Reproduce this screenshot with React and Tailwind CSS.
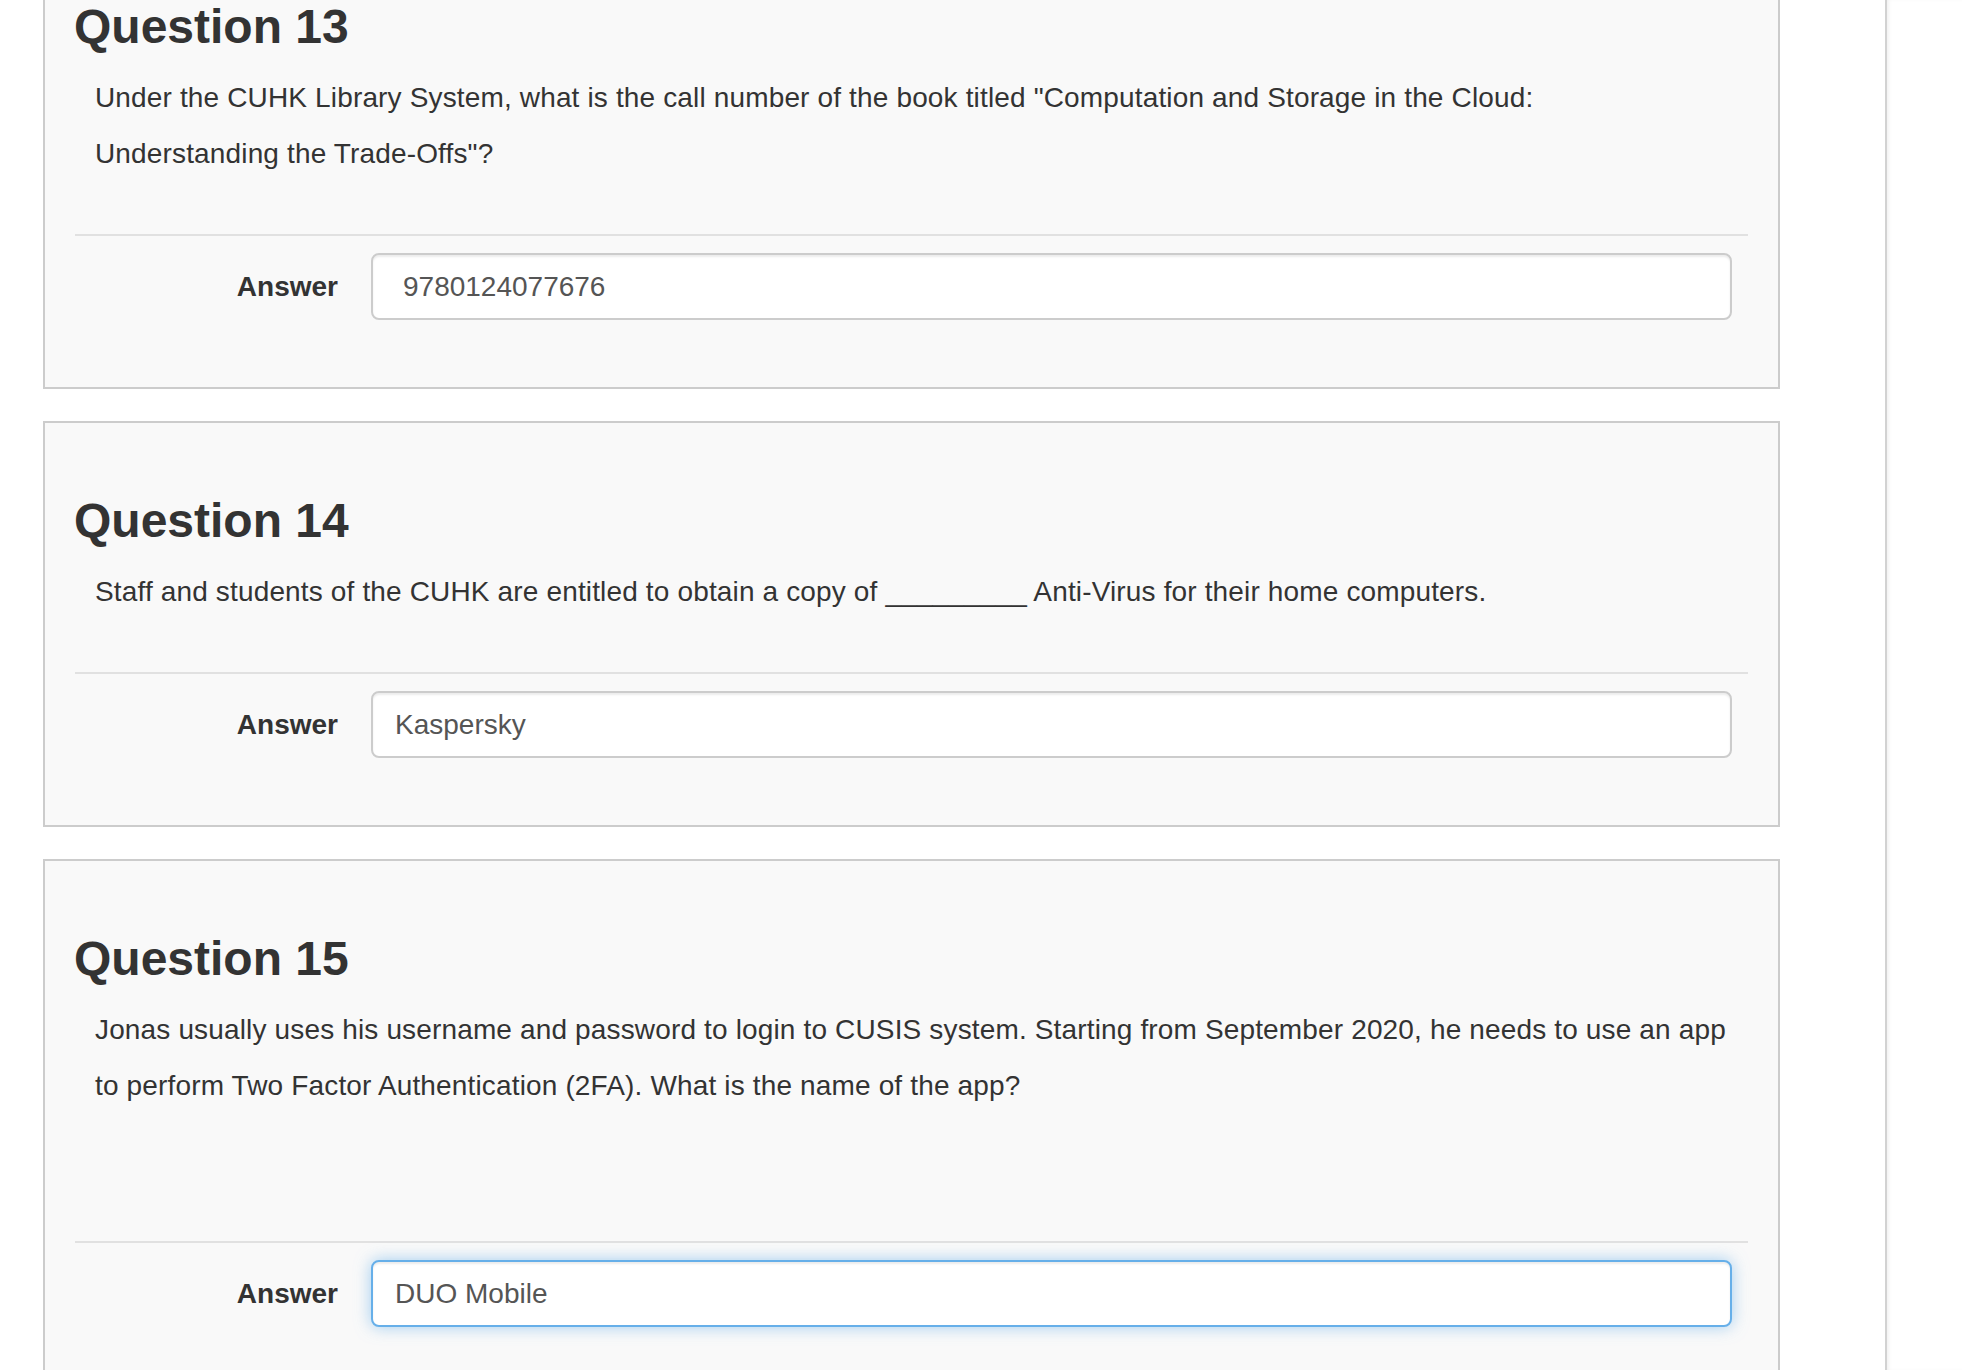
import React from "react";

function Card({ title, lines, answer, focused, extraGap = 0, inputPad = "pl-[22px]" }) {
  return (
    <div className="w-[1737px] border-2 border-[#cccccc] bg-[#f9f9f9] px-[30px] pt-[71px] pb-[67px]">
      <h3 className="-ml-[1px] h-[53px] text-[48px] leading-[53px] font-bold text-[#333333]">{title}</h3>
      <p className="mt-[17px] pl-[20px] text-[28px] leading-[56px] tracking-[0.15px] text-[#333333] whitespace-nowrap">
        {lines.map((l, i) => (
          <React.Fragment key={i}>
            {l}
            {i < lines.length - 1 && <br />}
          </React.Fragment>
        ))}
      </p>
      {extraGap > 0 && <div className="h-[75px]" />}
      <div className="mt-[52px] h-[2px] bg-[#e1e1e1]" />
      <div className="mt-[17px] flex items-center">
        <label className="w-[263px] text-right text-[28px] font-bold text-[#333333]">Answer</label>
        <input
          readOnly
          value={answer}
          className={
            "ml-[33px] mr-[16px] h-[67px] flex-1 rounded-[8px] border-2 bg-white pr-[20px] text-[28px] text-[#555555] outline-none " +
            inputPad +
            " " +
            (focused
              ? "border-[#66afe9] shadow-[inset_0_2px_2px_rgba(0,0,0,0.075),0_0_16px_rgba(102,175,233,0.6)]"
              : "border-[#cccccc] shadow-[inset_0_2px_2px_rgba(0,0,0,0.075)]")
          }
        />
      </div>
    </div>
  );
}

export default function App() {
  return (
    <div className="flex h-[1370px] w-full overflow-hidden bg-white font-['Liberation_Sans',Arial,sans-serif]">
      <div className="w-[1885px] shrink-0 pl-[43px]">
        <div className="-mt-[73px] flex flex-col gap-[32px]">
          <Card
            title="Question 13"
            lines={[
              'Under the CUHK Library System, what is the call number of the book titled "Computation and Storage in the Cloud:',
              'Understanding the Trade-Offs"?',
            ]}
            answer="9780124077676"
            inputPad="pl-[30px]"
          />
          <Card
            title="Question 14"
            lines={[
              "Staff and students of the CUHK are entitled to obtain a copy of _________ Anti-Virus for their home computers.",
            ]}
            answer="Kaspersky"
          />
          <Card
            title="Question 15"
            lines={[
              "Jonas usually uses his username and password to login to CUSIS system. Starting from September 2020, he needs to use an app",
              "to perform Two Factor Authentication (2FA). What is the name of the app?",
            ]}
            answer="DUO Mobile"
            focused
            extraGap={75}
          />
        </div>
      </div>
      <div className="flex-1 border-l-2 border-[#d2d2d2] shadow-[inset_3px_0_4px_-2px_rgba(0,0,0,0.08)]" />
    </div>
  );
}
